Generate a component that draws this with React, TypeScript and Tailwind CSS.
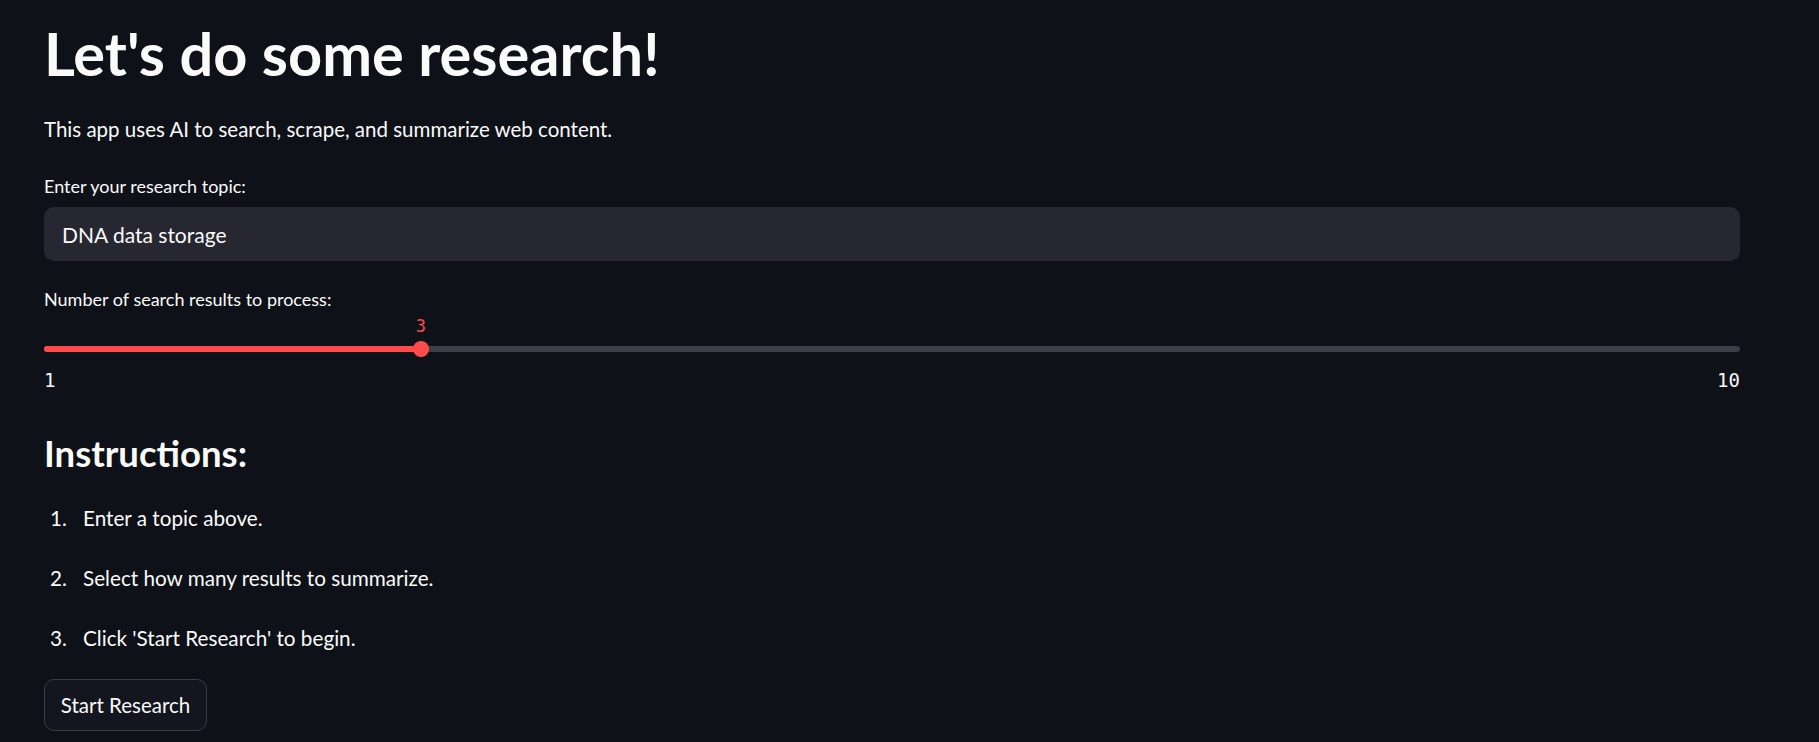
import React from "react";

export default function App() {
  const min = 1;
  const max = 10;
  const value = 3;
  const pct = ((value - min) / (max - min)) * 100;
  return (
    <div className="w-[1819px] h-[742px] overflow-hidden bg-[#0e1117] text-[#fafafa] font-['Lato','Noto_Sans',sans-serif]">
      <div className="ml-[44px] w-[1696px] pt-[20px] flex flex-col">
        <h1 className="text-[59.5px] leading-[67px] font-bold">Let's do some research!</h1>
        <p className="mt-[30px] text-[20.5px] leading-[25px]">This app uses AI to search, scrape, and summarize web content.</p>
        <label className="mt-[33px] text-[18px] leading-[22px]">Enter your research topic:</label>
        <div className="mt-[10px] h-[54px] rounded-[10px] bg-[#262730] flex items-center pl-[18px] text-[21px] leading-[25px]">
          DNA data storage
        </div>
        <label className="mt-[27px] text-[18px] leading-[22px]">Number of search results to process:</label>
        <div className="relative h-[52px]">
          <div
            className="absolute top-[8px] -translate-x-1/2 text-[17px] leading-[17px] text-[#ff4b4b] font-['DejaVu_Sans_Mono',monospace]"
            style={{ left: `${pct}%` }}
          >
            {value}
          </div>
          <div className="absolute top-[36px] left-0 right-0 h-[6px] rounded-full bg-[#3b3e46]" />
          <div className="absolute top-[36px] left-0 h-[6px] rounded-full bg-[#ff4b4b]" style={{ width: `${pct}%` }} />
          <div
            className="absolute top-[31px] w-[16px] h-[16px] -translate-x-1/2 rounded-full bg-[#ff4b4b]"
            style={{ left: `${pct}%` }}
          />
        </div>
        <div className="mt-[9px] flex justify-between text-[19px] leading-[18px] font-['DejaVu_Sans_Mono',monospace]">
          <span>{min}</span>
          <span>{max}</span>
        </div>
        <h3 className="mt-[43px] text-[36.5px] leading-[43px] font-bold">Instructions:</h3>
        <ol className="mt-[31px] flex flex-col gap-[35px] text-[20.7px] leading-[25px]">
          <li className="flex"><span className="w-[39px] pl-[6px]">1.</span><span>Enter a topic above.</span></li>
          <li className="flex"><span className="w-[39px] pl-[6px]">2.</span><span>Select how many results to summarize.</span></li>
          <li className="flex"><span className="w-[39px] pl-[6px]">3.</span><span>Click 'Start Research' to begin.</span></li>
        </ol>
        <button className="mt-[28px] w-[163px] h-[52px] rounded-[10px] border border-[#3a3d45] bg-[#13161e] text-[20.5px] leading-[25px] text-[#fafafa]">
          Start Research
        </button>
      </div>
    </div>
  );
}
